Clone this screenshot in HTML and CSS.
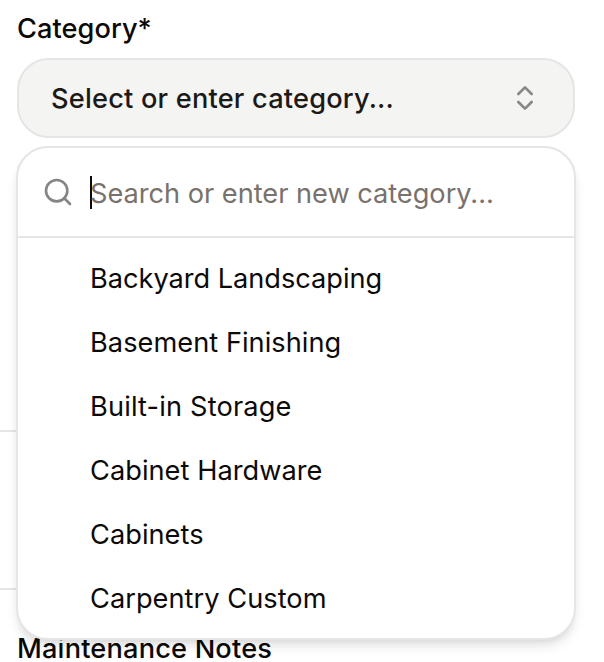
FILE: index.html
```html
<!DOCTYPE html>
<html lang="en">
<head>
<meta charset="utf-8">
<title>Category</title>
<link rel="stylesheet" href="styles.css">
</head>
<body>
<main class="form">
  <div class="field">
    <div class="label">Category*</div>
    <div class="trigger">
      <span>Select or enter category...</span>
      <svg class="chevrons" viewBox="0 0 24 24"><path d="m7 15 5 5 5-5"/><path d="m7 9 5-5 5 5"/></svg>
    </div>
    <div class="popover">
      <div class="search">
        <svg class="magnifier" viewBox="0 0 24 24"><circle cx="11" cy="11" r="8"/><path d="m21 21-4.3-4.3"/></svg>
        <span class="caret"></span>
        <span class="placeholder">Search or enter new category...</span>
      </div>
      <ul class="options">
        <li class="wide">Backyard Landscaping</li>
        <li>Basement Finishing</li>
        <li class="narrow">Built-in Storage</li>
        <li>Cabinet Hardware</li>
        <li>Cabinets</li>
        <li>Carpentry Custom</li>
      </ul>
    </div>
  </div>
  <div class="rows"></div>
  <div class="label notes">Maintenance Notes</div>
</main>
</body>
</html>
```
FILE: styles.css
```css
* { box-sizing: border-box; }
body {
  margin: 0;
  height: 662px;
  overflow: hidden;
  background: #fff;
  color: #0c0a09;
  font-family: Inter, "Liberation Sans", sans-serif;
  font-size: 27.2px;
}
.form { height: 662px; overflow: hidden; }
.field { position: relative; height: 430px; padding: 9px 29px 0 17px; }
.label { height: 40px; line-height: 40px; font-weight: 500; letter-spacing: 0.05px; white-space: nowrap; }
.trigger {
  display: flex;
  align-items: center;
  justify-content: space-between;
  height: 80px;
  margin-top: 9px;
  padding: 0 32px;
  border: 2px solid #e5e5e5;
  border-radius: 32px;
  background: #f4f4f2;
  color: #1c1917;
  font-weight: 500;
  letter-spacing: 0.2px;
  white-space: nowrap;
}
svg { flex: none; fill: none; stroke: currentColor; stroke-width: 2; stroke-linecap: round; stroke-linejoin: round; }
.chevrons { width: 32px; height: 32px; color: #888886; }
.popover {
  position: absolute;
  z-index: 1;
  top: 146px;
  left: 16px;
  width: 560px;
  height: 494px;
  border: 2px solid #e5e5e5;
  border-radius: 32px;
  background: #fff;
  box-shadow: 0 8px 12px -2px rgb(0 0 0 / .1), 0 4px 8px -4px rgb(0 0 0 / .1);
}
.search {
  display: flex;
  align-items: center;
  height: 90px;
  padding-left: 24px;
  border-bottom: 2px solid #e5e5e5;
  white-space: nowrap;
}
.magnifier { width: 32px; height: 32px; margin-right: 16px; color: #858585; }
.caret { width: 2px; height: 33px; margin-right: -2px; background: #0c0a09; }
.placeholder { padding-top: 2px; color: #78716c; letter-spacing: -0.02px; }
.options { margin: 0; padding: 9px 0 0 72px; list-style: none; letter-spacing: 0.04px; }
.options li { height: 64px; line-height: 64px; white-space: nowrap; }
.options .wide { letter-spacing: -0.03px; }
.options .narrow { letter-spacing: 0.16px; }
.rows { width: 560px; height: 160px; border-top: 2px solid #e5e5e5; border-bottom: 2px solid #e5e5e5; }
.notes { margin-top: 39px; padding-left: 17px; letter-spacing: 0.18px; }
```
